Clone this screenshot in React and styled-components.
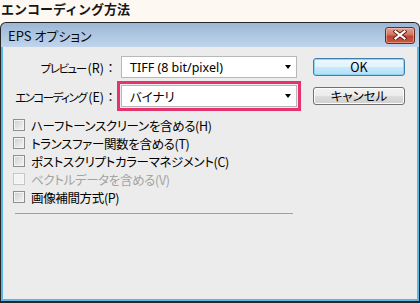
import React from "react";
import styled, { createGlobalStyle, css } from "styled-components";

const GlobalStyle = createGlobalStyle`
  html, body { margin: 0; padding: 0; background: #fdf8f1; }
  body {
    width: 420px; height: 303px; overflow: hidden;
    font-family: "Noto Sans CJK JP", "Noto Sans", sans-serif;
    color: #000;
  }
`;

const Page = styled.div`
  width: 420px;
  height: 303px;
  display: flex;
  flex-direction: column;
`;

const Heading = styled.h1`
  margin: 0;
  flex: none;
  height: 22px;
  line-height: 17px;
  padding-left: 1px;
  font-size: 13px;
  font-weight: 700;
  color: #161616;
`;

const Window = styled.div`
  flex: 1;
  display: flex;
  flex-direction: column;
  border: 1px solid #262626;
  border-bottom-width: 2px;
  border-radius: 6px 6px 0 0;
  overflow: hidden;
  background: linear-gradient(#9bb7d6, #c0d5eb 24px);
`;

const TitleBar = styled.div`
  flex: none;
  height: 24px;
  display: flex;
  align-items: center;
  justify-content: space-between;
  padding: 0 4px 0 7px;
`;

const Title = styled.span`
  font-size: 13px;
  font-feature-settings: "palt";
  color: #0a0a0a;
`;

const CloseButton = styled.button`
  width: 30px;
  height: 17px;
  padding: 0;
  border: 1px solid #6e2a20;
  border-radius: 3px;
  background: linear-gradient(#e3a394 0%, #d4725f 45%, #bc4430 55%, #c8593f 100%);
  box-shadow: inset 0 0 0 1px rgba(255, 220, 210, 0.45);
  display: flex;
  align-items: center;
  justify-content: center;
`;

const Body = styled.div`
  flex: 1;
  background: #ececec;
  border: 2px solid #5cb5e3;
  border-top: none;
  padding-top: 9px;
  display: flex;
  flex-direction: column;
`;

const FormGrid = styled.div`
  display: grid;
  grid-template-columns: 114px 176px 92px;
  grid-template-rows: 22px 22px;
  column-gap: 4px;
  row-gap: 7px;
  & > :nth-child(3n) { margin-left: 12px; }
`;

const Label = styled.span`
  justify-self: end;
  align-self: center;
  display: flex;
  align-items: baseline;
  font-size: 12.5px;
  white-space: nowrap;
`;

const LabelText = styled.span`
  font-size: 11.5px;
  letter-spacing: -1.5px;
  font-feature-settings: "palt";
`;

const Mnemonic = styled.span`
  margin-left: 2px;
`;

const Colon = styled.span`
  width: 13px;
  text-align: center;
`;

const Select = styled.div`
  display: flex;
  align-items: center;
  justify-content: space-between;
  border: 1px solid #b8b8b8;
  background: #fff;
  padding: 0 5px 0 8px;
  font-family: "Noto Sans", "Noto Sans CJK JP", sans-serif;
  font-size: 12.5px;
  ${(p) =>
    p.$highlight &&
    css`
      outline: 3px solid #e5336d;
      outline-offset: 1px;
    `}
`;

const SelectText = styled.span`
  font-feature-settings: "palt";
`;

const Arrow = styled.span`
  width: 0;
  height: 0;
  border-left: 3.5px solid transparent;
  border-right: 3.5px solid transparent;
  border-top: 4px solid #000;
`;

const Button = styled.button`
  align-self: center;
  width: 92px;
  height: 18px;
  padding: 0;
  border-radius: 3px;
  font-family: "Noto Sans CJK JP", "Noto Sans", sans-serif;
  font-size: 12.5px;
  font-feature-settings: "palt";
  line-height: 16px;
  color: #000;
  ${(p) =>
    p.$primary
      ? css`
          border: 1px solid #3c7fb1;
          background: linear-gradient(#eef8fd 0%, #e0f3fc 50%, #c9eafc 51%, #b4def5 100%);
          box-shadow: inset 0 0 0 1px #8fd6f6;
        `
      : css`
          border: 1px solid #707070;
          background: linear-gradient(#f2f2f2 0%, #ebebeb 50%, #dddddd 51%, #cfcfcf 100%);
          box-shadow: inset 0 0 0 1px #fcfcfc;
        `}
`;

const CheckList = styled.div`
  margin-top: 9px;
  padding-left: 10px;
  display: flex;
  flex-direction: column;
`;

const CheckRow = styled.label`
  height: 18px;
  display: flex;
  align-items: center;
  gap: 6px;
  font-size: 12.5px;
  letter-spacing: -0.35px;
  font-feature-settings: "palt";
  white-space: nowrap;
  color: ${(p) => (p.$disabled ? "#a3a3a3" : "#000")};
`;

const Box = styled.span`
  flex: none;
  width: 12px;
  height: 12px;
  box-sizing: border-box;
  border: 1px solid ${(p) => (p.$disabled ? "#c6c6c6" : "#8e8f8f")};
  background: ${(p) =>
    p.$disabled ? "#f3f3f3" : "linear-gradient(135deg, #cfcfcf, #f6f6f6)"};
  box-shadow: inset 0 0 0 1px ${(p) => (p.$disabled ? "#f8f8f8" : "#f4f4f4")};
`;

const Separator = styled.div`
  margin: 7px 0 0 12px;
  width: 278px;
  height: 1px;
  background: #a0a0a0;
`;

const CloseIcon = () => (
  <svg width="14" height="10" viewBox="0 0 14 10">
    <path d="M2.5 1.5 L11.5 8.5 M11.5 1.5 L2.5 8.5" stroke="#5a1c14" strokeWidth="4" strokeLinecap="square" />
    <path d="M2.5 1.5 L11.5 8.5 M11.5 1.5 L2.5 8.5" stroke="#ffffff" strokeWidth="2.2" strokeLinecap="square" />
  </svg>
);

const FieldLabel = ({ text, mnemonic }) => (
  <Label>
    <LabelText>{text}</LabelText>
    <Mnemonic>({mnemonic})</Mnemonic>
    <Colon>：</Colon>
  </Label>
);

const options = [
  { text: "ハーフトーンスクリーンを含める(H)" },
  { text: "トランスファー関数を含める(T)" },
  { text: "ポストスクリプトカラーマネジメント(C)" },
  { text: "ベクトルデータを含める(V)", disabled: true },
  { text: "画像補間方式(P)" },
];

export default function App() {
  return (
    <Page>
      <GlobalStyle />
      <Heading>エンコーディング方法</Heading>
      <Window>
        <TitleBar>
          <Title>EPS オプション</Title>
          <CloseButton aria-label="閉じる">
            <CloseIcon />
          </CloseButton>
        </TitleBar>
        <Body>
          <FormGrid>
            <FieldLabel text="プレビュー" mnemonic="R" />
            <Select>
              <SelectText>TIFF (8 bit/pixel)</SelectText>
              <Arrow />
            </Select>
            <Button $primary>OK</Button>
            <FieldLabel text="エンコーディング" mnemonic="E" />
            <Select $highlight>
              <SelectText>バイナリ</SelectText>
              <Arrow />
            </Select>
            <Button>キャンセル</Button>
          </FormGrid>
          <CheckList>
            {options.map((o) => (
              <CheckRow key={o.text} $disabled={o.disabled}>
                <Box $disabled={o.disabled} />
                {o.text}
              </CheckRow>
            ))}
          </CheckList>
          <Separator />
        </Body>
      </Window>
    </Page>
  );
}
